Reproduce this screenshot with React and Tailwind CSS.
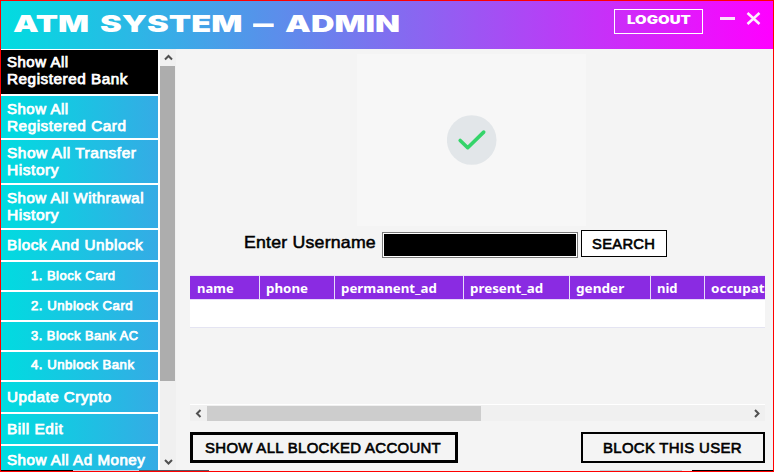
import { useLayoutEffect, useRef, useState } from "react";

// Single-line label whose glyphs are widened or narrowed to span `width` pixels.
function Label({ width, className = "", children }) {
  const ref = useRef(null);
  const [scale, setScale] = useState(1);
  useLayoutEffect(() => {
    setScale(width / ref.current.offsetWidth);
  }, [width]);
  return (
    <span className="block" style={{ width }}>
      <span
        ref={ref}
        className={`block w-max origin-left whitespace-pre ${className}`}
        style={{ transform: `scaleX(${scale})` }}
      >
        {children}
      </span>
    </span>
  );
}

const menu = [
  { h: "h-[44px]", active: true, raised: true, lines: [["Show All", 62], ["Registered Bank", 121]] },
  { h: "h-[42px]", lines: [["Show All", 62], ["Registered Card", 119]] },
  { h: "h-[43px]", lines: [["Show All Transfer", 129], ["History", 52]] },
  { h: "h-[43px]", lines: [["Show All Withrawal", 137], ["History", 52]] },
  { h: "h-[30px]", lines: [["Block And Unblock", 136]] },
  { h: "h-[28px]", sub: true, lines: [["1. Block Card", 85]] },
  { h: "h-[28px]", sub: true, lines: [["2. Unblock Card", 102]] },
  { h: "h-[28px]", sub: true, lines: [["3. Block Bank AC", 108]] },
  { h: "h-[28px]", sub: true, raised: true, lines: [["4. Unblock Bank", 104]] },
  { h: "h-[30px]", lines: [["Update Crypto", 105]] },
  { h: "h-[30px]", lines: [["Bill Edit", 56]] },
  { h: "h-[30px]", raised: true, lines: [["Show All Ad Money", 138]] },
];

const columns = [
  ["name", 37, "w-[69px]"],
  ["phone", 42, "w-[74px]"],
  ["permanent_ad", 96, "w-[128px]"],
  ["present_ad", 73, "w-[105px]"],
  ["gender", 48, "w-[80px]"],
  ["nid", 21, "w-[53px]"],
  ["occupat", 54, "w-[60px]"],
];

const titleWords = [
  ["ATM", 76],
  ["SYSTEM", 143],
  ["–", 21],
  ["ADMIN", 115],
];

function Arrow({ d }) {
  return (
    <svg width="9" height="9" viewBox="0 0 9 9" fill="none" stroke="#505050" strokeWidth="2">
      <path d={d} />
    </svg>
  );
}

function MenuItem({ item }) {
  const text = item.sub ? "text-[12.5px] leading-[17px]" : "text-[14px] leading-[17px]";
  const fill = item.active ? "bg-black" : "bg-linear-to-r/srgb from-[#00dce0] to-[#35abe5]";
  return (
    <button
      className={`flex w-[157px] shrink-0 flex-col items-start justify-center text-white ${item.h} ${fill} ${item.sub ? "pl-[30px]" : "pl-[6px]"} ${item.raised ? "pb-[2px]" : "pt-px"}`}
    >
      {item.lines.map(([t, w]) => (
        <Label key={t} width={w} className={`font-[Liberation_Sans,sans-serif] tracking-[0.5px] [-webkit-text-stroke:0.75px_white] ${text}`}>
          {t}
        </Label>
      ))}
    </button>
  );
}

export default function App() {
  const dark = "font-[Liberation_Sans,sans-serif] text-black tracking-[0.3px] [-webkit-text-stroke:0.6px_black]";
  return (
    <div className="flex h-[472px] w-[774px] flex-col overflow-hidden border border-[#ff0000] bg-[#f4f4f4]">
      <header className="flex h-[48px] shrink-0 items-start bg-linear-to-r/srgb from-[#00dde0] to-[#ff00ff] pl-[12px] text-white">
        <h1 className="mt-[7px] flex w-[387px] justify-between">
          {titleWords.map(([word, w]) => (
            <Label key={word} width={w} className="font-[Inter,sans-serif] text-[23.5px] font-black leading-[32px]">
              {word}
            </Label>
          ))}
        </h1>
        <button className="ml-[214px] mt-[8px] flex h-[25px] w-[89px] justify-center border border-white pt-[2px]">
          <Label width={64} className="font-[Inter,sans-serif] text-[11.5px] font-black leading-[17px]">
            LOGOUT
          </Label>
        </button>
        <button className="ml-[17px] mt-[16px] h-[3px] w-[15px] bg-[#fbe0fb]" aria-label="Minimize" />
        <button className="ml-[11px] mt-[11px]" aria-label="Close">
          <svg width="15" height="13" viewBox="0 0 15 13" stroke="#fff0ff" strokeWidth="2.5">
            <path d="M1.5 1 13.5 12M13.5 1 1.5 12" />
          </svg>
        </button>
      </header>

      <div className="flex h-[421px] shrink-0">
        <nav className="flex w-[159px] shrink-0 flex-col gap-[2px] overflow-hidden bg-white pt-px">
          {menu.map((item) => (
            <MenuItem key={item.lines.map((l) => l[0]).join(" ")} item={item} />
          ))}
        </nav>
        <div className="flex w-[16px] shrink-0 flex-col items-center bg-[#f0f0f0]">
          <div className="flex h-[17px] items-center">
            <Arrow d="M1 6.5 4.5 3 8 6.5" />
          </div>
          <div className="h-[315px] w-[15px] self-start bg-[#adadad]" />
          <div className="mt-auto flex h-[17px] items-center">
            <Arrow d="M1 3 4.5 6.5 8 3" />
          </div>
        </div>

        <main className="flex w-[597px] flex-col pl-[14px]">
          <div className="ml-[167px] mt-[5px] flex h-[172px] w-[229px] items-center justify-center bg-[#f7f7f7]">
            <svg width="50" height="50" viewBox="0 0 50 50">
              <circle cx="24.7" cy="25" r="24.8" fill="#e2e6e9" />
              <path d="m13.2 25.5 7.5 7.2 16-15.6" fill="none" stroke="#35d46a" strokeWidth="3.6" strokeLinecap="round" strokeLinejoin="round" />
            </svg>
          </div>

          <div className="ml-[54px] mt-[4px] flex items-start">
            <div className="mt-[2px]">
              <Label width={132} className="font-[Liberation_Sans,sans-serif] text-[16.5px] leading-[20px] tracking-[0.2px] text-black [-webkit-text-stroke:0.5px_black]">
                Enter Username
              </Label>
            </div>
            <div className="ml-[6px] mt-[2px] h-[26px] w-[196px] border border-[#7a7a7a] bg-white p-px">
              <div className="h-full bg-black" />
            </div>
            <button className="ml-[3px] flex h-[27px] w-[86px] items-center border border-black bg-white pl-[10px]">
              <Label width={63} className={`text-[14.5px] leading-[18px] ${dark}`}>SEARCH</Label>
            </button>
          </div>

          <div className="mt-[17px] h-[129px] w-[575px] overflow-hidden border-t border-[#eae2f7]">
            <div className="flex h-[24px] border-b border-[#e6dcf8] bg-[#8a2be2]">
              {columns.map(([name, w, cell], i) => (
                <div
                  key={name}
                  className={`flex shrink-0 items-center box-content text-white ${i < 6 ? "border-r border-[#e6dcf8]" : ""} ${cell}`}
                >
                  <div className={i === 0 ? "pl-[7px]" : "pl-[6px]"}>
                    <Label width={w} className="font-[Noto_Sans,sans-serif] text-[13px] font-bold leading-[18px]">
                      {name}
                    </Label>
                  </div>
                </div>
              ))}
            </div>
            <div className="h-[28px] border-b border-[#e4e4f2] bg-white" />
          </div>

          <div className="flex h-[17px] w-[575px] items-center border-t border-white bg-[#f0f0f0]">
            <div className="flex w-[17px] justify-center">
              <Arrow d="M6.5 1 3 4.5 6.5 8" />
            </div>
            <div className="h-[15px] w-[274px] bg-[#cdcdcd]" />
            <div className="ml-auto flex w-[17px] justify-center">
              <Arrow d="M3 1 6.5 4.5 3 8" />
            </div>
          </div>

          <div className="mt-[11px] flex w-[575px] shrink-0 justify-between">
            <button className="flex h-[31px] w-[268px] items-center border-[3px] border-black pl-[12px]">
              <Label width={236} className={`text-[14.5px] leading-[18px] ${dark}`}>SHOW ALL BLOCKED ACCOUNT</Label>
            </button>
            <button className="flex h-[31px] w-[184px] items-center border-2 border-black pl-[20px]">
              <Label width={139} className={`text-[14.5px] leading-[18px] ${dark}`}>BLOCK THIS USER</Label>
            </button>
          </div>
        </main>
      </div>

      {/* Sliver of the desktop showing beneath the window */}
      <div className="flex h-px shrink-0">
        <div className="w-[72px] bg-black" />
        <div className="w-[66px] bg-[#bcd9ea]" />
        <div className="w-[70px] bg-[#555560]" />
        <div className="w-[391px] bg-[#f4f4f4]" />
        <div className="w-[82px] bg-[#bcd3da]" />
        <div className="w-[10px] bg-[#f4f4f4]" />
        <div className="w-[81px] bg-black" />
      </div>
    </div>
  );
}
